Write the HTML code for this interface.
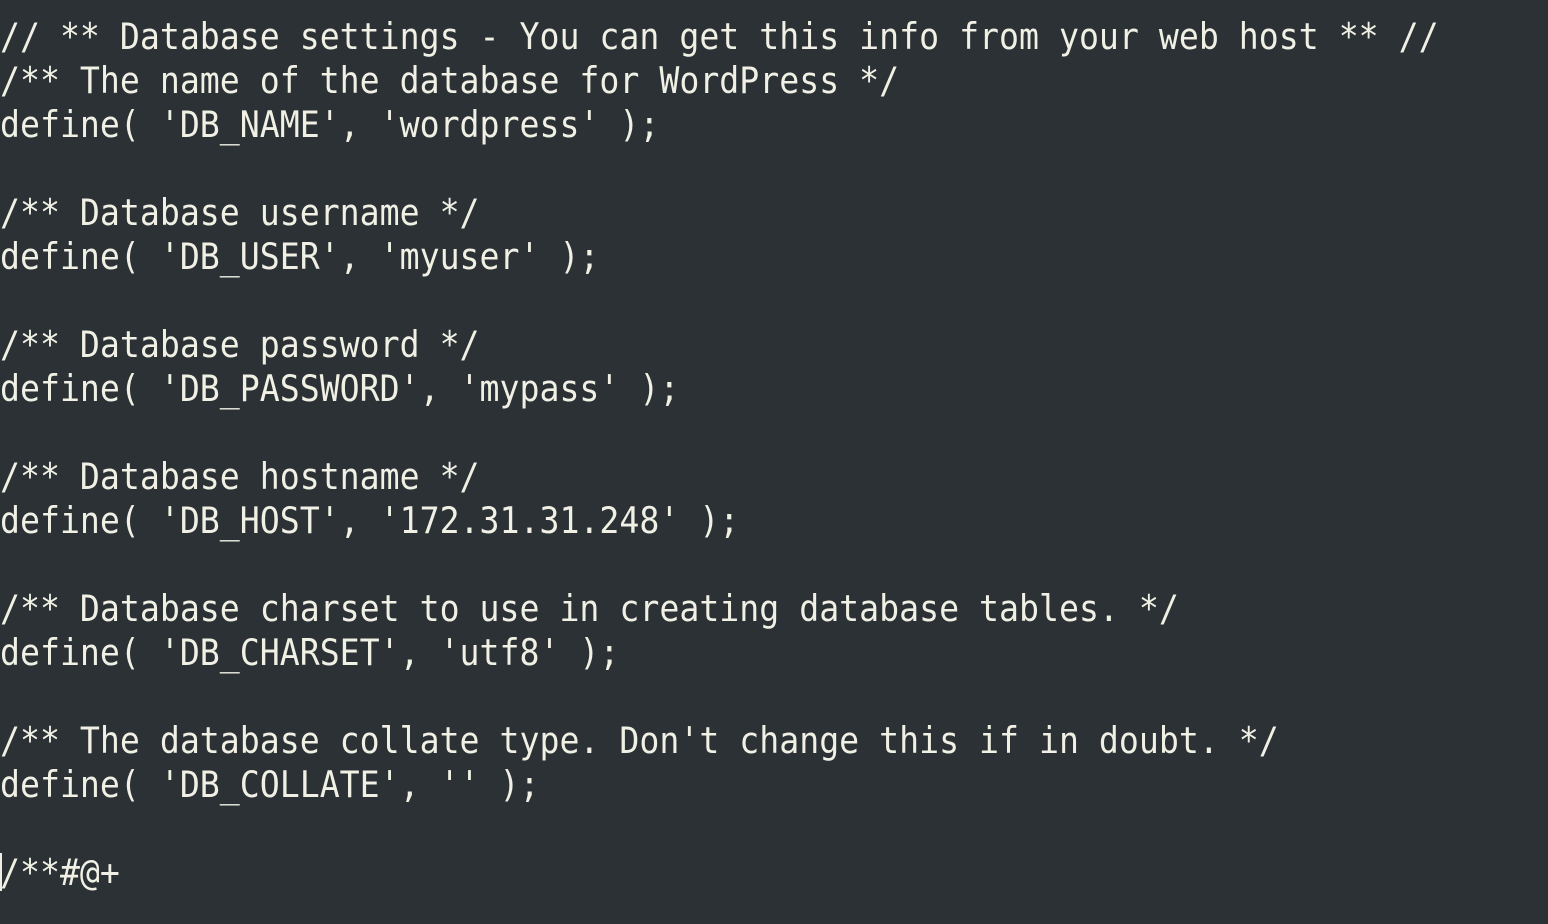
<!DOCTYPE html>
<html><head><meta charset="utf-8"><style>
html,body{margin:0;padding:0;background:#2b3135;width:1548px;height:924px;overflow:hidden}
pre{position:absolute;left:0;top:15px;margin:0;font-family:"DejaVu Sans Mono","Liberation Mono",monospace;font-size:33.2px;line-height:40px;color:#f0f0e4;transform:scaleY(1.1);transform-origin:0 0;white-space:pre}
.cur{position:absolute;left:0;top:853px;width:2px;height:38px;background:#eeeee6}
</style></head><body>
<pre>// ** Database settings - You can get this info from your web host ** //
/** The name of the database for WordPress */
define( 'DB_NAME', 'wordpress' );

/** Database username */
define( 'DB_USER', 'myuser' );

/** Database password */
define( 'DB_PASSWORD', 'mypass' );

/** Database hostname */
define( 'DB_HOST', '172.31.31.248' );

/** Database charset to use in creating database tables. */
define( 'DB_CHARSET', 'utf8' );

/** The database collate type. Don't change this if in doubt. */
define( 'DB_COLLATE', '' );

/**#@+</pre>
<div class="cur"></div>
</body></html>
